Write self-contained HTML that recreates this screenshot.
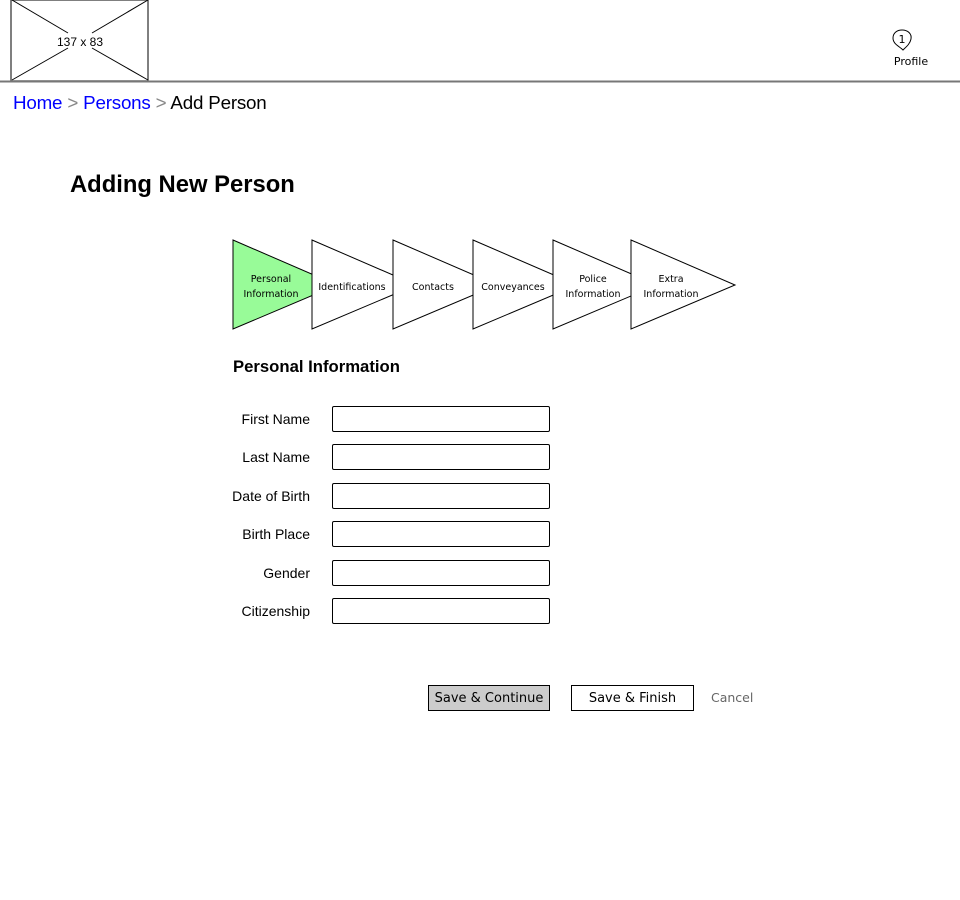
<!DOCTYPE html>
<html><head><meta charset="utf-8"><style>
body{margin:0;width:960px;height:900px;background:#fff;font-family:"Liberation Sans",sans-serif;position:relative;overflow:hidden}
.a{position:absolute}
.lbl{font-size:14px;color:#000;text-align:right;width:100px}
.inp{position:absolute;left:332px;width:216px;height:24px;border:1px solid #000;border-radius:2px;background:#fff}
.cm{font-family:"DejaVu Sans",sans-serif}
</style></head><body>
<svg class="a" style="left:0;top:0" width="960" height="340">
<rect x="11" y="0" width="137" height="81" fill="#fff" stroke="#555" stroke-width="1.5"/>
<line x1="12" y1="0" x2="68" y2="33" stroke="#000"/><line x1="148" y1="0" x2="92" y2="33" stroke="#000"/>
<line x1="12" y1="80" x2="68" y2="48" stroke="#000"/><line x1="148" y1="80" x2="92" y2="48" stroke="#000"/>
<text x="80" y="46" font-size="12" text-anchor="middle" font-family="Liberation Sans">137 x 83</text>
<line x1="0" y1="81.5" x2="960" y2="81.5" stroke="#777" stroke-width="2"/>
<path d="M903 50 C899 46 893 44 893 38 C893 33 897 30 902 30 C908 30 912 34 911 39 C910 44 906 47 903 50 Z" fill="#fff" stroke="#000"/>
<text x="902" y="43" font-size="11" text-anchor="middle" font-family="DejaVu Sans">1</text>
<text x="911" y="65" font-size="11" text-anchor="middle" font-family="DejaVu Sans">Profile</text>
<g stroke="#000" stroke-width="1">
<polygon points="233,240 337,285 233,329" fill="#98fb98"/>
<polygon points="312,240 416,285 312,329" fill="#fff"/>
<polygon points="393,240 497,285 393,329" fill="#fff"/>
<polygon points="473,240 577,285 473,329" fill="#fff"/>
<polygon points="553,240 657,285 553,329" fill="#fff"/>
<polygon points="631,240 735,285 631,329" fill="#fff"/>
</g>
<g font-family="DejaVu Sans" font-size="9.5" text-anchor="middle">
<text x="271" y="282">Personal</text><text x="271" y="297">Information</text>
<text x="352" y="290">Identifications</text>
<text x="433" y="290">Contacts</text>
<text x="513" y="290">Conveyances</text>
<text x="593" y="282">Police</text><text x="593" y="297">Information</text>
<text x="671" y="282">Extra</text><text x="671" y="297">Information</text>
</g>
</svg>
<div class="a" style="left:13px;top:92px;font-size:18.8px;letter-spacing:-0.2px;color:#888"><span style="color:#00f">Home</span> &gt; <span style="color:#00f">Persons</span> &gt; <span style="color:#000">Add Person</span></div>
<div class="a" style="left:70px;top:171px;font-size:23.8px;font-weight:bold">Adding New Person</div>
<div class="a" style="left:233px;top:357px;font-size:16.7px;font-weight:bold">Personal Information</div>
<div class="a lbl" style="left:210px;top:411px">First Name</div><div class="inp" style="top:406px"></div>
<div class="a lbl" style="left:210px;top:449px">Last Name</div><div class="inp" style="top:444px"></div>
<div class="a lbl" style="left:210px;top:488px">Date of Birth</div><div class="inp" style="top:483px"></div>
<div class="a lbl" style="left:210px;top:526px">Birth Place</div><div class="inp" style="top:521px"></div>
<div class="a lbl" style="left:210px;top:565px">Gender</div><div class="inp" style="top:560px"></div>
<div class="a lbl" style="left:210px;top:603px">Citizenship</div><div class="inp" style="top:598px"></div>
<div class="a cm" style="left:428px;top:685px;width:120px;height:24px;border:1px solid #000;background:#ccc;font-size:13px;line-height:25px;text-align:center">Save &amp; Continue</div>
<div class="a cm" style="left:571px;top:685px;width:121px;height:24px;border:1px solid #000;background:#fff;font-size:13px;line-height:25px;text-align:center">Save &amp; Finish</div>
<div class="a cm" style="left:711px;top:690px;font-size:12.5px;color:#666">Cancel</div>
</body></html>
